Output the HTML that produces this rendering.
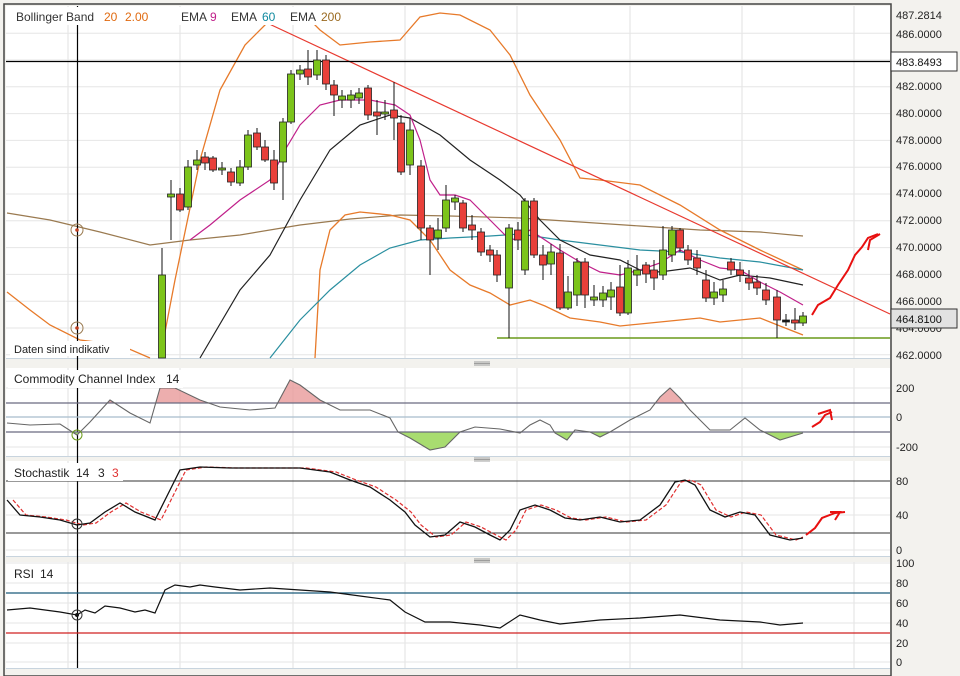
<!DOCTYPE html>
<html><head><meta charset="utf-8"><style>
body{margin:0;background:#fff;width:960px;height:676px;overflow:hidden;font-family:"Liberation Sans",sans-serif}
svg{display:block}
text{font-family:"Liberation Sans",sans-serif}
</style></head><body>
<svg id="s" width="960" height="676" xmlns="http://www.w3.org/2000/svg">
<rect width="960" height="676" fill="#f3f2ee"/>
<rect x="4" y="4" width="887" height="672" fill="#f3f2ee" stroke="#444" stroke-width="1.5"/>
<rect x="6" y="6" width="884" height="352" fill="#fff"/>
<rect x="6" y="368" width="884" height="88" fill="#fff"/>
<rect x="6" y="461" width="884" height="95" fill="#fff"/>
<rect x="6" y="562" width="884" height="106" fill="#fff"/>
<g id="grid" stroke="#e2e2e2" stroke-width="1"></g>
<g id="main"></g>
</svg>
<script>
const s=document.getElementById('main'),g=document.getElementById('grid');
const NS='http://www.w3.org/2000/svg';
function el(p,t,a){const e=document.createElementNS(NS,t);for(const k in a)e.setAttribute(k,a[k]);p.appendChild(e);return e;}
function line(p,x1,y1,x2,y2,c,w){el(p,'line',{x1,y1,x2,y2,stroke:c,'stroke-width':w||1});}
function pl(pts,c,w,extra){const a={points:pts.map(p=>p.join(',')).join(' '),fill:'none',stroke:c,'stroke-width':w||1.2};Object.assign(a,extra||{});el(s,'polyline',a);}
function txt(x,y,t,c,sz,anchor){const e=el(s,'text',{x,y,fill:c||'#222','font-size':sz||12});if(anchor)e.setAttribute('text-anchor',anchor);e.textContent=t;}
const vx=[68,180,293,405,517,630,742,854];
[[6,358],[368,456],[461,556],[562,668]].forEach(([a,b])=>vx.forEach(x=>line(g,x,a,x,b,'#e2e2e2')));
for(let p=462;p<=486;p+=2){const y=328-(p-464)*13.4;line(g,6,y,890,y,'#e6e6e6');}
[388,403,417,432,447].forEach(y=>line(g,6,y,890,y,'#e6e6e6'));
[481,498,515,533,550].forEach(y=>line(g,6,y,890,y,'#e6e6e6'));
[563,583,603,623,643,662].forEach(y=>line(g,6,y,890,y,'#e6e6e6'));
[[358,368],[456,461],[556,562],[668,676]].forEach(([a,b])=>{line(s,6,a+0.5,890,a+0.5,'#c8d4de');});
[362,458,559].forEach(y=>{for(let i=0;i<3;i++)line(s,474,y+i*1.5,490,y+i*1.5,'#888',0.8);});
pl([[7,213],[50,220],[100,232],[150,245],[190,240],[240,235],[300,225],[350,219],[400,215],[450,216],[520,218],[580,222],[640,226],[700,230],[760,232],[803,236]],'#9a7a50',1.2);
pl([[160,358],[175,280],[200,160],[220,90],[245,45],[270,20],[300,10],[320,30],[340,45],[370,42],[400,40],[420,17],[440,13],[460,15],[490,30],[510,55],[530,95],[560,140],[580,178],[600,180],[640,185],[680,205],[720,230],[760,250],[803,270]],'#e77a2a',1.3);
pl([[7,292],[30,310],[50,325],[80,340],[120,345],[150,358]],'#e77a2a',1.3);
pl([[315,358],[320,270],[330,230],[345,215],[360,212],[390,215],[410,220],[430,240],[450,270],[470,285],[490,293],[510,305],[530,300],[545,306],[570,318],[600,322],[620,326],[660,322],[700,318],[720,322],[760,318],[780,326],[803,335]],'#e77a2a',1.3);
pl([[270,358],[300,320],[330,290],[360,265],[390,248],[420,240],[450,238],[490,236],[520,234],[560,240],[600,245],[640,250],[680,252],[720,258],[760,262],[803,270]],'#2a8fa0',1.2);
pl([[200,358],[240,290],[270,255],[300,200],[330,150],[360,125],[390,115],[410,118],[440,135],[470,160],[500,180],[520,195],[540,220],[560,240],[590,255],[620,260],[640,270],[660,272],[690,268],[720,280],[740,275],[770,278],[803,285]],'#222',1.2);
pl([[190,240],[210,225],[240,200],[270,180],[285,150],[300,125],[320,105],[340,100],[370,100],[395,105],[410,115],[420,140],[430,180],[440,195],[455,195],[470,200],[490,220],[505,235],[515,240],[530,230],[545,240],[560,250],[580,262],[600,272],[620,275],[640,270],[660,263],[680,250],[700,260],[720,268],[740,270],[760,282],[780,292],[803,305]],'#c0208a',1.2);
line(s,265,22,890,314,'#e83a30',1.2);
line(s,497,338,890,338,'#6a9a1a',1.5);
line(s,6,61.5,890,61.5,'#000',1.2);
line(s,77.5,6,77.5,668,'#000',1.2);
const C=[[162,358,275,248,358],[171,197,194,180,240],[180,194,210,188,212],[188,207,167,160,210],[197,165,160,150,170],[205,157,163,152,170],[213,158,170,156,172],[222,170,168,162,175],[231,172,182,168,186],[240,183,167,160,186],[248,167,135,130,170],[257,133,147,128,150],[265,147,160,140,162],[274,160,183,150,190],[283,162,122,118,200],[291,122,74,70,124],[300,74,70,65,80],[308,69,77,50,85],[317,75,60,50,80],[326,60,84,55,90],[334,85,95,80,116],[342,100,96,90,108],[351,100,95,90,108],[359,98,93,88,104],[368,88,115,85,120],[377,112,116,100,135],[385,114,112,100,120],[394,110,118,82,140],[401,123,172,115,175],[410,165,130,118,175],[421,166,228,160,240],[430,228,240,225,275],[438,238,230,218,250],[446,228,200,185,232],[455,202,198,195,210],[463,203,228,200,232],[472,225,230,215,240],[481,232,252,228,256],[490,250,255,245,262],[497,255,275,250,282],[509,288,228,224,338],[518,230,240,222,250],[525,270,201,198,275],[534,201,255,198,258],[543,255,265,245,280],[551,264,252,244,275],[560,253,308,244,310],[568,308,292,276,310],[577,295,262,258,306],[585,262,295,258,308],[594,300,297,285,306],[603,300,293,286,307],[611,297,290,282,310],[620,287,313,265,316],[628,313,268,260,315],[637,275,270,255,286],[646,265,274,262,283],[654,270,278,260,290],[663,275,250,226,280],[672,255,230,226,262],[680,230,248,228,252],[688,250,260,245,265],[697,258,268,250,275],[706,280,298,270,302],[714,298,292,282,305],[723,295,289,280,302],[731,262,270,258,275],[740,270,275,262,282],[749,278,283,270,290],[757,282,288,275,295],[766,290,300,283,305],[777,297,320,290,338],[786,320,320,314,326],[795,320,323,308,330],[803,323,316,312,326]];
C.forEach(([x,o,c,h,l])=>{line(s,x,h,x,l,'#111',1);const t=Math.min(o,c),b=Math.max(o,c);const up=c<o;el(s,'rect',{x:x-3.5,y:t,width:7,height:Math.max(b-t,2),fill:b-t<2?'#111':(up?'#7cc41a':'#e8403a'),stroke:'#222','stroke-width':0.8});});
[[77,230],[77,328]].forEach(([x,y])=>{el(s,'circle',{cx:x,cy:y,r:6,fill:'none',stroke:'#9a7a50','stroke-width':1});el(s,'circle',{cx:x,cy:y,r:1.8,fill:'#c04020'});});
el(s,'rect',{x:8,y:7,width:335,height:18,fill:'#fff'});
txt(16,21,'Bollinger Band','#333',12);txt(104,21,'20','#e06a10',12);txt(125,21,'2.00','#e06a10',12);
txt(181,21,'EMA','#333',12);txt(210,21,'9','#c0208a',12);txt(231,21,'EMA','#333',12);txt(262,21,'60','#108aa0',12);txt(290,21,'EMA','#333',12);txt(321,21,'200','#9a6a20',12);
el(s,'rect',{x:10,y:341,width:120,height:15,fill:'#fff'});
txt(14,353,'Daten sind indikativ','#222',11);
[[487.2814,15],[486,34],[482,86],[480,113],[478,140],[476,166],[474,193],[472,220],[470,247],[468,274],[466,301],[462,355]].forEach(([p,y])=>txt(896,y+4,p.toFixed(4),'#222',11));
txt(896,332,'464.0000','#222',11);
el(s,'rect',{x:891,y:52,width:66,height:19,fill:'#fff',stroke:'#333','stroke-width':1});txt(896,66,'483.8493','#111',11);
el(s,'rect',{x:891,y:309,width:66,height:19,fill:'#e2e2e2',stroke:'#333','stroke-width':1});txt(896,323,'464.8100','#111',11);
const cci=[[7,423],[30,425],[60,424],[77,435],[90,422],[110,400],[130,413],[150,423],[160,388],[175,388],[200,400],[220,407],[250,410],[275,408],[290,380],[300,385],[320,400],[340,410],[370,410],[390,418],[398,432],[410,438],[430,450],[445,447],[460,432],[475,427],[500,429],[520,433],[530,425],[540,420],[550,425],[555,433],[567,440],[575,430],[590,432],[600,437],[610,432],[630,420],[650,410],[660,397],[670,388],[680,398],[690,410],[700,420],[710,430],[730,430],[745,418],[760,430],[780,440],[803,433]];
const defs=el(s,'defs',{});
const c1=el(defs,'clipPath',{id:'ca'});el(c1,'rect',{x:0,y:0,width:960,height:403});
const c2=el(defs,'clipPath',{id:'cb'});el(c2,'rect',{x:0,y:432,width:960,height:40});
const pts=cci.map(p=>p.join(',')).join(' ');
el(s,'polygon',{points:'7,403 '+pts+' 803,403',fill:'#e89a9a','clip-path':'url(#ca)',opacity:0.8});
el(s,'polygon',{points:'7,432 '+pts+' 803,432',fill:'#a8dc70','clip-path':'url(#cb)'});
line(s,6,403,890,403,'#6a6a80',1.2);line(s,6,417,890,417,'#a8bccc',1.2);line(s,6,432,890,432,'#6a6a80',1.2);
pl(cci,'#666',1.1);
el(s,'circle',{cx:77,cy:435,r:5,fill:'none',stroke:'#6a9a1a'});
el(s,'rect',{x:8,y:370,width:175,height:18,fill:'#fff'});
txt(14,383,'Commodity Channel Index','#222',12);txt(166,383,'14','#222',12);
[[200,388],[0,417],[-200,447]].forEach(([v,y])=>txt(896,y+4,String(v),'#222',11));
line(s,6,481,890,481,'#333',1);line(s,6,533,890,533,'#333',1);
const K=[[7,500],[20,515],[40,517],[60,520],[77,525],[90,523],[105,512],[120,503],[135,512],[155,520],[170,490],[180,470],[200,467],[230,468],[260,468],[300,468],[330,472],[350,480],[370,487],[390,500],[405,512],[415,525],[430,537],[445,535],[460,522],[475,527],[490,535],[500,540],[510,530],[520,510],[535,505],[550,510],[565,518],[580,520],[600,517],[620,522],[640,520],[660,505],[675,482],[685,480],[695,485],[710,510],[725,517],[740,512],[755,515],[770,535],[790,540],[803,538]];
pl(K.map(([x,y])=>[x+6,y]).filter(p=>p[0]<=803).concat([[803,537]]),'#e03030',1.2,{'stroke-dasharray':'4,2'});
pl(K,'#111',1.3);
el(s,'circle',{cx:77,cy:524,r:5,fill:'none',stroke:'#333'});
el(s,'rect',{x:8,y:463,width:115,height:18,fill:'#fff'});
txt(14,477,'Stochastik','#222',12);txt(76,477,'14','#222',12);txt(98,477,'3','#222',12);txt(112,477,'3','#e03030',12);
[[80,481],[40,515],[0,550]].forEach(([v,y])=>txt(896,y+4,String(v),'#222',11));
line(s,6,593,890,593,'#1a5a7a',1.2);line(s,6,633,890,633,'#d02020',1.2);
pl([[7,610],[30,608],[60,612],[77,615],[85,610],[95,613],[105,606],[120,608],[135,612],[145,610],[155,613],[165,590],[175,585],[190,587],[200,585],[215,587],[240,590],[270,588],[300,590],[330,592],[360,596],[390,600],[405,612],[425,622],[450,622],[480,625],[500,628],[520,615],[540,620],[560,624],[600,620],[640,618],[680,615],[720,620],[760,622],[780,625],[803,623]],'#111',1.2);
el(s,'circle',{cx:77,cy:615,r:5,fill:'none',stroke:'#333'});el(s,'circle',{cx:77,cy:615,r:2,fill:'#111'});
txt(14,578,'RSI','#222',12);txt(40,578,'14','#222',12);
[[100,563],[80,583],[60,603],[40,623],[20,643],[0,662]].forEach(([v,y])=>txt(896,y+4,String(v),'#222',11));
pl([[812,315],[818,305],[830,298],[838,285],[848,270],[855,255],[862,247],[868,238],[878,234]],'#e81010',2);
pl([[868,250],[870,240],[880,234]],'#e81010',2);
pl([[812,427],[820,422],[825,415],[832,412]],'#e81010',2);pl([[818,414],[830,410],[832,420]],'#e81010',2);
pl([[806,535],[815,528],[822,518],[835,513],[845,512]],'#e81010',2);pl([[835,520],[840,512],[830,512]],'#e81010',2);
</script>
</body></html>
